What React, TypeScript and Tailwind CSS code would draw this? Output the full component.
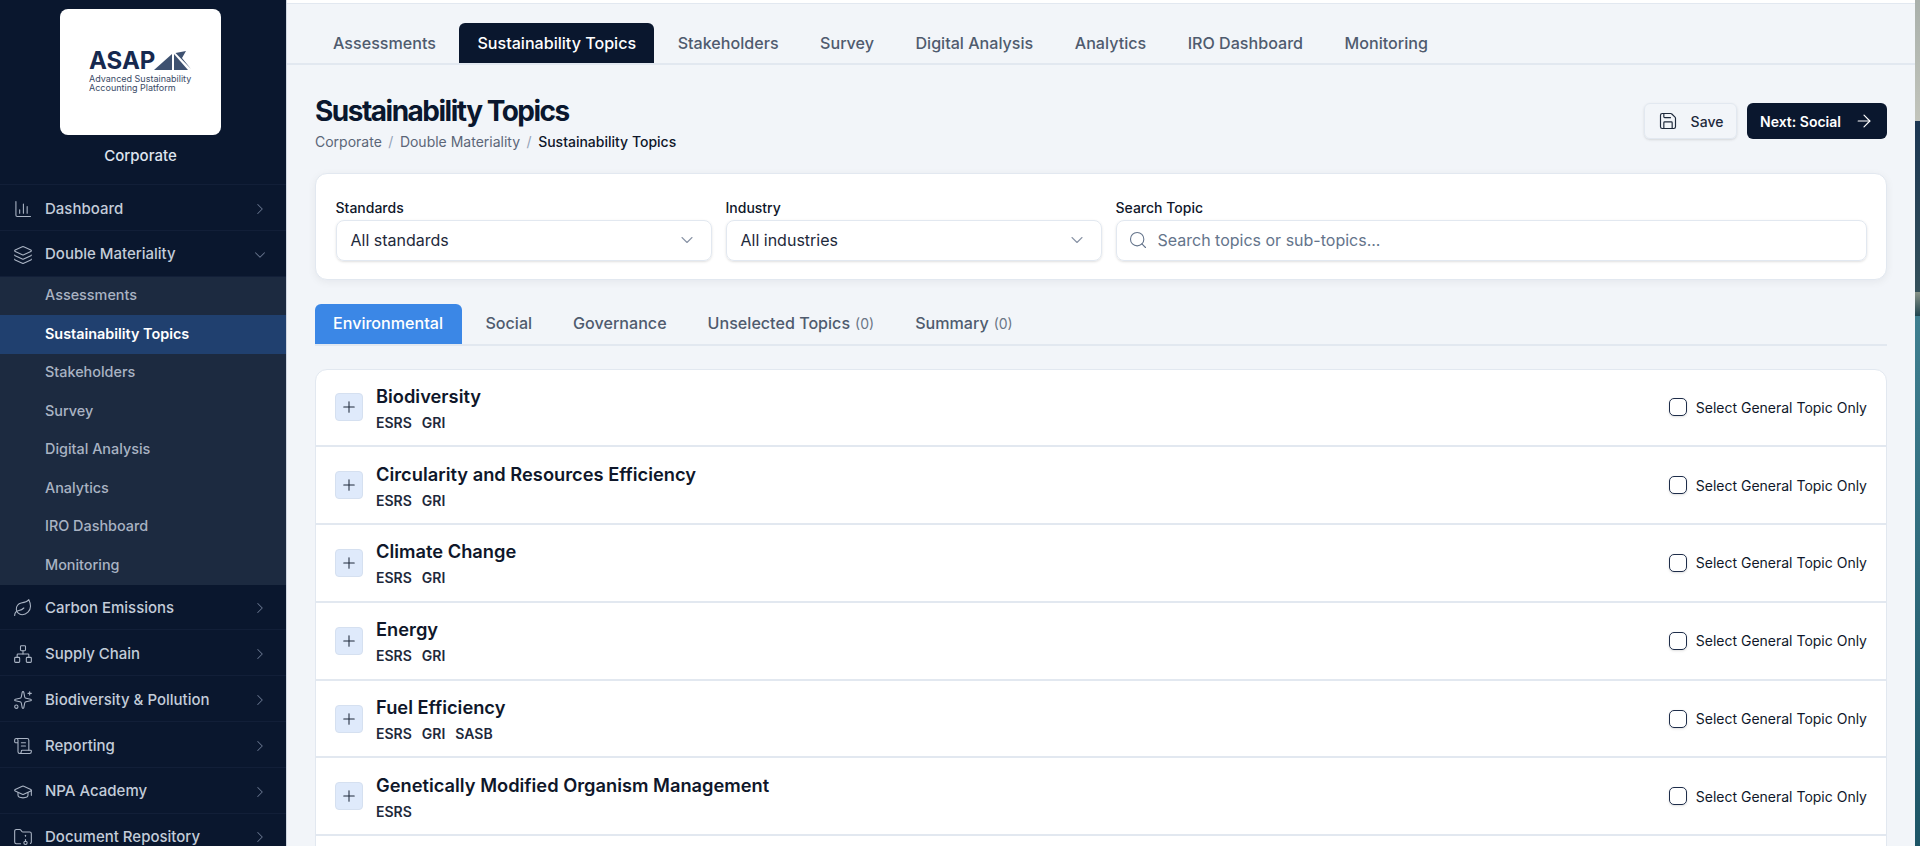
import React from "react";
import { ChevronRight, ChevronDown, Layers, Leaf, Network, Sparkles, ScrollText, GraduationCap, FolderArchive, Save, ArrowRight, Plus, Search } from "lucide-react";

const ChartIcon = () => (
  <svg width="20" height="20" viewBox="0 0 24 24" fill="none" stroke="currentColor" strokeWidth="1.3" strokeLinecap="round">
    <path d="M3.5 3v16.5a1.5 1.5 0 0 0 1.5 1.5H21" />
    <path d="M8 17v-4M12.5 17V6M17 17V9" />
  </svg>
);

const Logo = () => (
  <div className="w-[161px] h-[126px] bg-white rounded-lg ml-[60px] pl-[29px] pt-[41px]">
    <div className="flex items-end h-[22px]">
      <span className="text-[24px] leading-[22px] font-bold text-[#16294f] font-['Inter',sans-serif]">ASAP</span>
      <svg width="42" height="22" viewBox="0 0 42 22" className="-ml-[4px] shrink-0">
        <path d="M3 20 L21 4 L21 20 Z" fill="#3e5170" />
        <path d="M23 4 L23 20 L37 20 Z" fill="#3e5170" />
        <path d="M24.5 3 L35 1 L31 8 L40 19 Z" fill="#3e5170" />
      </svg>
    </div>
    <div className="text-[9px] leading-[8.5px] mt-[3px] text-[#3a4a66] whitespace-nowrap font-['Inter',sans-serif]">Advanced Sustainability</div>
    <div className="text-[9px] leading-[8.5px] text-[#3a4a66] whitespace-nowrap font-['Inter',sans-serif]">Accounting Platform</div>
  </div>
);

const navAfter: [string, React.ReactNode][] = [
  ["Carbon Emissions", <Leaf size={20} strokeWidth={1.3} />],
  ["Supply Chain", <Network size={20} strokeWidth={1.3} />],
  ["Biodiversity & Pollution", <Sparkles size={20} strokeWidth={1.3} />],
  ["Reporting", <ScrollText size={20} strokeWidth={1.3} />],
  ["NPA Academy", <GraduationCap size={20} strokeWidth={1.3} />],
  ["Document Repository", <FolderArchive size={20} strokeWidth={1.3} />],
];

const NavItem = ({ label, icon, open }: { label: string; icon: React.ReactNode; open?: boolean }) => (
  <div className="h-[45.8px] shrink-0 flex items-center pt-[3px] pl-[13px] pr-[17px] text-[#c3ccd9] border-b border-[#121f38]">
    <span className="w-[20px] flex justify-center text-[#aab4c4]">{icon}</span>
    <span className="ml-[12px] text-[15px] font-medium flex-1">{label}</span>
    {open ? <ChevronDown size={18} strokeWidth={1.4} className="text-[#64718a]" /> : <ChevronRight size={18} strokeWidth={1.4} className="text-[#64718a]" />}
  </div>
);

const subItems = ["Assessments", "Sustainability Topics", "Stakeholders", "Survey", "Digital Analysis", "Analytics", "IRO Dashboard", "Monitoring"];

const Sidebar = () => (
  <aside className="w-[287px] shrink-0 h-full bg-[#0a172e] border-r border-[#cfd6e0] flex flex-col overflow-hidden font-['Inter',sans-serif]">
    <div className="h-[185px] shrink-0 pt-[9px] border-b border-[#121f38]">
      <Logo />
      <div className="mt-[10px] pr-[5px] text-center text-[15px] font-medium text-[#dfe5ee]">Corporate</div>
    </div>
    <NavItem label="Dashboard" icon={<ChartIcon />} />
    <NavItem label="Double Materiality" icon={<Layers size={20} strokeWidth={1.3} />} open />
    <div className="bg-[#1c2a40] shrink-0">
      {subItems.map((s) =>
        s === "Sustainability Topics" ? (
          <div key={s} className="h-[38.5px] flex items-center pb-[2px] pl-[45px] text-[14.4px] font-semibold text-white bg-[#20406f]">{s}</div>
        ) : (
          <div key={s} className="h-[38.5px] flex items-center pb-[2px] pl-[45px] text-[14.4px] font-medium text-[#a9b3c3]">{s}</div>
        )
      )}
    </div>
    {navAfter.map(([l, i]) => <NavItem key={l} label={l} icon={i} />)}
  </aside>
);

const topTabs = ["Assessments", "Sustainability Topics", "Stakeholders", "Survey", "Digital Analysis", "Analytics", "IRO Dashboard", "Monitoring"];

const TopTabs = () => (
  <div className="h-[61px] shrink-0 flex items-end gap-[5.5px] px-[28px] border-b-2 border-[#e2e8f0]">
    {topTabs.map((t) =>
      t === "Sustainability Topics" ? (
        <div key={t} className="h-[40px] px-[18px] flex items-center rounded-t-md bg-[#0a172e] text-white text-[16.1px] font-medium">{t}</div>
      ) : (
        <div key={t} className="h-[40px] px-[18px] flex items-center text-[#4f5b6e] text-[16.1px] font-medium">{t}</div>
      )
    )}
  </div>
);

const Filters = () => (
  <div className="mt-[22px] h-[107px] shrink-0 bg-white border border-[#e2e8f0] rounded-xl shadow-[0_2px_8px_rgba(15,23,42,0.06)] pl-[19.5px] pr-[19px] pt-[25px] flex gap-[14px]">
    <div className="w-[376px]">
      <div className="text-[14px] font-medium leading-[18px] text-[#0f172a]">Standards</div>
      <div className="mt-[3px] h-[41px] px-[14px] border border-[#e2e8f0] rounded-lg shadow-sm flex items-center justify-between text-[16px] text-[#1e293b]">
        <span>All standards</span>
        <ChevronDown size={20} strokeWidth={1.3} className="text-[#8a94a6]" />
      </div>
    </div>
    <div className="w-[376px]">
      <div className="text-[14px] font-medium leading-[18px] text-[#0f172a]">Industry</div>
      <div className="mt-[3px] h-[41px] px-[14px] border border-[#e2e8f0] rounded-lg shadow-sm flex items-center justify-between text-[16px] text-[#1e293b]">
        <span>All industries</span>
        <ChevronDown size={20} strokeWidth={1.3} className="text-[#8a94a6]" />
      </div>
    </div>
    <div className="flex-1">
      <div className="text-[14px] font-medium leading-[18px] text-[#0f172a]">Search Topic</div>
      <div className="mt-[3px] h-[41px] px-[11px] border border-[#e2e8f0] rounded-lg shadow-sm flex items-center text-[16px] text-[#64748b]">
        <Search size={20} strokeWidth={1.3} className="text-[#64748b]" />
        <span className="ml-[10px]">Search topics or sub-topics...</span>
      </div>
    </div>
  </div>
);

const subTabs: [string, string?][] = [["Environmental"], ["Social"], ["Governance"], ["Unselected Topics", "(0)"], ["Summary", "(0)"]];

const SubTabs = () => (
  <div className="mt-[25px] h-[41px] shrink-0 flex items-end gap-[5px] border-b-2 border-[#e2e8f0]">
    {subTabs.map(([t, c], i) =>
      i === 0 ? (
        <div key={t} className="h-[40px] pl-[18px] pr-[19.5px] flex items-center rounded-t-md bg-[#3b87e6] text-white text-[16.1px] font-medium">{t}</div>
      ) : (
        <div key={t} className="h-[40px] px-[18px] flex items-center text-[#4f5b6e] text-[16.1px] font-medium">
          {t}
          {c && <span className="ml-[5px] text-[14px] text-[#6b7686] font-normal">{c}</span>}
        </div>
      )
    )}
  </div>
);

const topics: [string, string[]][] = [
  ["Biodiversity", ["ESRS", "GRI"]],
  ["Circularity and Resources Efficiency", ["ESRS", "GRI"]],
  ["Climate Change", ["ESRS", "GRI"]],
  ["Energy", ["ESRS", "GRI"]],
  ["Fuel Efficiency", ["ESRS", "GRI", "SASB"]],
  ["Genetically Modified Organism Management", ["ESRS"]],
];

const TopicList = () => (
  <div className="mt-[23px] bg-white border border-[#e2e8f0] rounded-t-xl shrink-0 pb-[60px]">
    {topics.map(([t, tags]) => (
      <div key={t} className="h-[77.8px] flex items-center pl-[19px] pr-[19px] border-b-2 border-[#e2e8f0]">
        <div className="w-[28px] h-[28px] rounded bg-[#dfeafb] border border-[#d5e0f0] flex items-center justify-center text-[#1e293b]">
          <Plus size={18} strokeWidth={1.4} />
        </div>
        <div className="ml-[13px] flex-1">
          <div className="text-[18.3px] leading-[26px] font-semibold text-[#0f172a]">{t}</div>
          <div className="mt-[5px] flex gap-[10px] text-[14px] leading-[18px] font-semibold text-[#1e293b]">
            {tags.map((g) => <span key={g}>{g}</span>)}
          </div>
        </div>
        <div className="w-[18px] h-[18px] rounded-[5px] border-[1.5px] border-[#1e2d4a] shadow-sm" />
        <span className="ml-[9px] text-[14px] font-normal text-[#0f172a]">Select General Topic Only</span>
      </div>
    ))}
  </div>
);

export default function App() {
  return (
    <div className="w-[1920px] h-[846px] overflow-hidden flex bg-[#f2f5f9] font-['Inter',sans-serif]">
      <Sidebar />
      <main className="flex-1 min-w-0 h-full flex flex-col overflow-hidden">
        <div className="h-[4px] shrink-0 bg-white border-b border-[#e2e8f0]" />
        <TopTabs />
        <div className="pl-[28px] pr-[28px] flex flex-col">
          <div className="mt-[28.5px] flex justify-between">
            <div>
              <h1 className="text-[28px] leading-[34px] font-bold tracking-[-1.5px] text-[#0a172e]">Sustainability Topics</h1>
              <div className="mt-[5px] text-[14px] leading-[18px] text-[#5b6678] flex gap-[6.5px]">
                <span>Corporate</span><span className="text-[#94a3b8]">/</span>
                <span>Double Materiality</span><span className="text-[#94a3b8]">/</span>
                <span className="text-[#0f172a] font-medium">Sustainability Topics</span>
              </div>
            </div>
            <div className="flex gap-[10px] mt-[9.5px]">
              <div className="h-[36px] w-[93px] border border-[#e2e8f0] rounded-md shadow-sm flex items-center justify-center gap-[13px] text-[14px] font-medium text-[#1e293b]">
                <Save size={20} strokeWidth={1.4} />Save
              </div>
              <div className="h-[36px] w-[140px] rounded-md bg-[#0a172e] text-white flex items-center justify-center gap-[13px] text-[14px] font-semibold">
                Next: Social<ArrowRight size={20} strokeWidth={1.4} />
              </div>
            </div>
          </div>
          <Filters />
          <SubTabs />
          <TopicList />
        </div>
      </main>
      <div className="w-[5px] shrink-0 h-full flex flex-col">
        <div className="h-[121px] bg-linear-to-b from-[#a9b0ab] to-[#c2c4bb]" />
        <div className="h-[171px] bg-linear-to-b from-[#1c3652] to-[#34505a]" />
        <div className="h-[24px] bg-linear-to-b from-[#8a9488] to-[#1f4650]" />
        <div className="flex-1 bg-linear-to-b from-[#3f7f90] to-[#1d5566]" />
      </div>
    </div>
  );
}
